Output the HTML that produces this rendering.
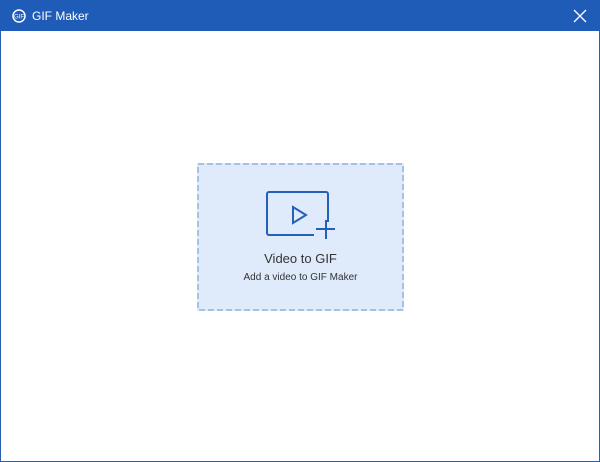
<!DOCTYPE html>
<html><head><style>
body{margin:0;width:600px;height:462px;background:#fff;font-family:"Liberation Sans",sans-serif;position:relative;overflow:hidden}
.win{position:absolute;left:0;top:0;width:598px;height:461px;border:1px solid #2a5fb0;border-top:none}
.bar{position:absolute;left:0;top:0;width:600px;height:31px;background:#1f5cb7;color:#fff;font-size:12px}
.box{position:absolute;left:197px;top:163px;width:207px;height:148px;background:#dfeafb;text-align:center;color:#333}
</style></head><body>
<div class="win"></div>
<div class="bar">
<svg width="14" height="14" style="position:absolute;left:12px;top:9px"><circle cx="7" cy="7" r="6" fill="none" stroke="#fff" stroke-width="1.5"/><text x="7" y="9.5" font-size="6" fill="#fff" text-anchor="middle" font-family="Liberation Sans">GIF</text></svg>
<span style="position:absolute;left:32px;top:9px">GIF Maker</span>
<svg width="14" height="14" style="position:absolute;left:573px;top:9px"><path d="M1 1L13 13M13 1L1 13" stroke="#fff" stroke-width="1.3"/></svg>
</div>
<div class="box">
<svg width="207" height="148" style="position:absolute;left:0;top:0"><rect x="1" y="1" width="205" height="146" fill="none" stroke="#93b3dc" stroke-width="1.5" stroke-dasharray="6 3"/></svg>
<svg width="80" height="60" style="position:absolute;left:67px;top:25px"><path d="M50 47H5a2 2 0 0 1-2-2V6a2 2 0 0 1 2-2H62a2 2 0 0 1 2 2V34" fill="none" stroke="#2560b8" stroke-width="2"/><path d="M29 19L42 27L29 35Z" fill="none" stroke="#2560b8" stroke-width="2"/><path d="M52 41H71M62 32V51" stroke="#2560b8" stroke-width="2"/></svg>
<div style="position:absolute;left:0;right:0;top:88px;font-size:13px">Video to GIF</div>
<div style="position:absolute;left:0;right:0;top:109px;font-size:10px">Add a video to GIF Maker</div>
</div>
</body></html>
